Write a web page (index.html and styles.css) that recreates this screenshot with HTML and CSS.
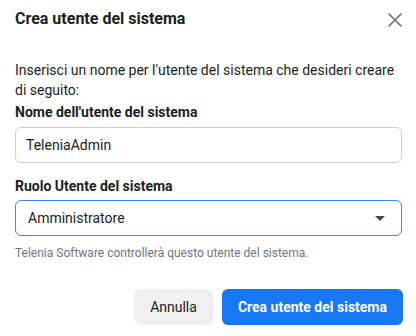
FILE: index.html
```html
<!DOCTYPE html>
<html lang="it">
<head>
<meta charset="utf-8">
<link rel="stylesheet" href="styles.css">
</head>
<body>
<div class="dialog">
  <div class="header">
    <h1 class="title">Crea utente del sistema</h1>
    <button class="close" aria-label="Chiudi">
      <svg width="14" height="14" viewBox="0 0 14 14"><path d="M1 1 L13 13 M13 1 L1 13" stroke="#606770" stroke-width="1.5" stroke-linecap="round" fill="none"/></svg>
    </button>
  </div>
  <div class="body">
    <p class="intro">Inserisci un nome per l'utente del sistema che desideri creare di seguito:</p>
    <label class="label">Nome dell'utente del sistema</label>
    <div class="field">TeleniaAdmin</div>
    <label class="label label-2">Ruolo Utente del sistema</label>
    <div class="field select">
      <span>Amministratore</span>
      <svg class="caret" width="10" height="5" viewBox="0 0 10 5"><path d="M0 0 L10 0 L5 5 Z" fill="#444950"/></svg>
    </div>
    <p class="help">Telenia Software controllerà questo utente del sistema.</p>
  </div>
  <div class="footer">
    <button class="btn btn-secondary">Annulla</button>
    <button class="btn btn-primary">Crea utente del sistema</button>
  </div>
</div>
</body>
</html>
```

FILE: styles.css
```css
* { box-sizing: border-box; }
html, body { margin: 0; padding: 0; background: #ffffff; }
body { font-family: Roboto, "Noto Sans", Arial, sans-serif; color: #1c1e21; }

.dialog { width: 416px; height: 336px; display: flex; flex-direction: column; }

.header { display: flex; align-items: center; justify-content: space-between; padding: 9px 14px 0 15px; height: 29px; }
.title { margin: 0; font-size: 16px; font-weight: 700; line-height: 20px; color: #1c1e21; }
.close { border: 0; background: none; padding: 0; width: 14px; height: 14px; margin-top: 1px; display: flex; }

.body { padding: 31px 14px 0 15px; display: flex; flex-direction: column; }
.intro { margin: 0; font-size: 14px; line-height: 20px; color: #1c1e21; }
.label { font-size: 14px; font-weight: 700; line-height: 20px; margin-top: 2px; color: #1c1e21; }
.label-2 { margin-top: 13px; }
.field { margin-top: 5px; height: 36px; border: 1px solid #ccd0d5; border-radius: 6px; padding: 0 12px 0 10px; display: flex; align-items: center; font-size: 14px; color: #1c1e21; }
.select { margin-top: 4px; border-color: #3b8af4; padding: 0 16px 0 12px; justify-content: space-between; }
.caret { display: block; margin-top: 1px; }
.help { margin: 9px 0 0; font-size: 12px; line-height: 16px; color: #737579; }

.footer { margin-top: auto; padding: 0 13px 11px 0; display: flex; justify-content: flex-end; gap: 9px; }
.btn { height: 36px; border: 0; border-radius: 6px; padding: 0 16px; font-family: inherit; font-size: 14px; line-height: 20px; white-space: nowrap; }
.btn-secondary { background: #f0f0f0; color: #1c1e21; }
.btn-primary { background: #1877f2; color: #ffffff; font-weight: 700; }
```
